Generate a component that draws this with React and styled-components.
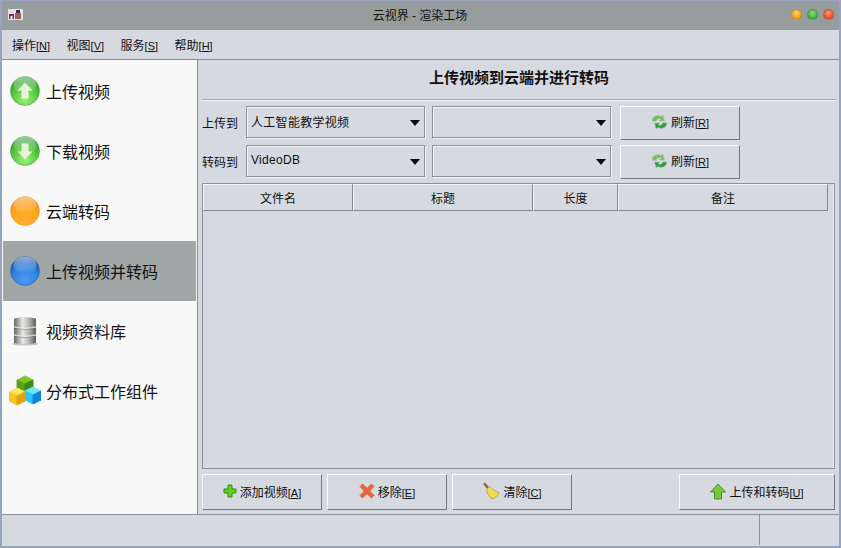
import React from 'react'
import styled, { createGlobalStyle } from 'styled-components'

const GlobalStyle = createGlobalStyle`
  html, body { margin: 0; padding: 0; background: #d6d9e0; }
  body { font-family: "Liberation Sans", "Noto Sans CJK SC", sans-serif; color: #111; }
  * { box-sizing: border-box; }
`

const Frame = styled.div`
  width: 841px;
  height: 548px;
  display: flex;
  flex-direction: column;
  background: #d6d9e0;
  border: 1px solid #97a3bf;
  border-width: 1px 2px 2px 2px;
  overflow: hidden;
`
const TitleBar = styled.div`
  height: 29px;
  flex: none;
  display: flex;
  align-items: center;
  background: #979c9c;
  padding: 0 5px 2px 6px;
  font-size: 12px;
  color: #141414;
`
const Title = styled.div`
  flex: 1;
  text-align: center;
  padding-left: 26px;
`
const Dots = styled.div`
  display: flex;
  gap: 5px;
`
const Dot = styled.span`
  width: 11px;
  height: 11px;
  border-radius: 50%;
  background: radial-gradient(circle at 50% 35%, ${p => p.$light}, ${p => p.$dark} 75%);
  border: 1px solid rgba(110, 110, 100, 0.35);
`
const MenuBar = styled.div`
  height: 30px;
  flex: none;
  display: flex;
  align-items: center;
  padding: 0 0 0 10px;
  gap: 16.5px;
  font-size: 12px;
  border-bottom: 1px solid #8b8e93;
`
const Mn = styled.span`
  display: inline-block;
  font-size: 11px;
  u { text-underline-offset: 1px; }
`
const Body = styled.div`
  flex: 1;
  min-height: 0;
  display: flex;
`
const Sidebar = styled.div`
  width: 196px;
  flex: none;
  background: #f9f9f9;
  padding: 1px 1px 0 1px;
  border-right: 1px solid #8b8e93;
`
const NavItem = styled.div`
  height: 60px;
  display: flex;
  align-items: center;
  gap: 5px;
  padding-left: 6px;
  font-size: 16px;
  background: ${p => (p.$active ? '#a1a6a7' : 'transparent')};
`
const Main = styled.div`
  flex: 1;
  min-width: 0;
  display: flex;
  flex-direction: column;
  padding: 0 3px 0 3px;
  border-left: 1px solid #d6d9e0;
`
const Heading = styled.div`
  height: 40px;
  flex: none;
  display: flex;
  align-items: center;
  justify-content: center;
  font-size: 15px;
  font-weight: 700;
  border-bottom: 1px solid #a3a6ab;
  box-shadow: 0 1px 0 #f2f3f6;
  padding-bottom: 6px;
`
const FormRows = styled.div`
  display: flex;
  flex-direction: column;
  gap: 6px;
  margin-top: 6px;
`
const FormRow = styled.div`
  display: flex;
  align-items: center;
  height: 33px;
`
const FieldLabel = styled.label`
  width: 44px;
  flex: none;
  font-size: 12px;
`
const Combo = styled.div`
  width: 180px;
  height: 33px;
  flex: none;
  margin-right: 6px;
  display: flex;
  align-items: center;
  justify-content: space-between;
  padding: 0 5px 3px 4px;
  font-size: 12px;
  letter-spacing: 0.3px;
  border: 1px solid;
  border-color: #8e9196 #f4f5f7 #f4f5f7 #8e9196;
  box-shadow: inset -1px -1px 0 #8e9196, inset 1px 1px 0 #f4f5f7;
`
const Caret = styled.span`
  width: 0;
  height: 0;
  border-left: 5.5px solid transparent;
  border-right: 5.5px solid transparent;
  border-top: 6px solid #0c0c0c;
  margin-top: 3px;
`
const Button = styled.button`
  width: ${p => p.$w || 120}px;
  height: ${p => p.$h || 34}px;
  flex: none;
  display: flex;
  align-items: center;
  justify-content: center;
  gap: 3px;
  padding: 0 0 2px;
  background: #d6d9e0;
  font: inherit;
  font-size: 12px;
  color: #111;
  border: 1px solid;
  border-color: #f7f8fa #74777c #74777c #f7f8fa;
`
const RefreshButton = styled(Button)`
  margin-left: 2px;
`
const TableFrame = styled.div`
  flex: 1;
  min-height: 0;
  margin-top: 5px;
  margin-right: 1px;
  border: 1px solid #8e9196;
  box-shadow: inset -1px 0 0 #f2f3f6;
`
const HeaderRow = styled.div`
  height: 27px;
  display: flex;
  padding-right: 5px;
`
const HeaderCell = styled.div`
  width: ${p => p.$w}px;
  flex: none;
  display: flex;
  align-items: center;
  justify-content: center;
  font-size: 12px;
  border: 1px solid;
  border-color: #f4f5f7 #84878c #84878c #f4f5f7;
`
const HeaderFill = styled.div`
  flex: 1;
  border-bottom: 1px solid transparent;
`
const ActionBar = styled.div`
  height: 45px;
  flex: none;
  display: flex;
  gap: 5px;
  padding: 5px 1px 0 0;
`
const Spacer = styled.div`
  flex: 1;
`
const StatusBar = styled.div`
  height: 32px;
  flex: none;
  display: flex;
  justify-content: flex-end;
  border-top: 1px solid #8b8e93;
`
const StatusCell = styled.div`
  width: 80px;
  margin-bottom: 1px;
  border-left: 1px solid #8e9196;
`

const Orb = ({ id, light, mid, dark, arrow }) => (
  <svg width="32" height="32" viewBox="0 0 32 32">
    <defs>
      <radialGradient id={id} cx="50%" cy="80%" r="75%">
        <stop offset="0" stopColor={light} />
        <stop offset="0.6" stopColor={mid} />
        <stop offset="1" stopColor={dark} />
      </radialGradient>
      <linearGradient id={`${id}-g`} x1="0" y1="0" x2="0" y2="1">
        <stop offset="0" stopColor="#fff" stopOpacity="0.55" />
        <stop offset="1" stopColor="#fff" stopOpacity="0" />
      </linearGradient>
    </defs>
    <circle cx="16" cy="16" r="14.5" fill={`url(#${id})`} stroke={dark} strokeOpacity="0.4" />
    <ellipse cx="16" cy="10" rx="11.5" ry="8.5" fill={`url(#${id}-g)`} />
    {arrow === 'up' && <path d="M16 7.5 L23.5 15.5 H19.5 V23.5 H12.5 V15.5 H8.5 Z" fill="#e4f5dc" />}
    {arrow === 'down' && <path d="M16 24.5 L23.5 16.5 H19.5 V8.5 H12.5 V16.5 H8.5 Z" fill="#e4f5dc" />}
  </svg>
)

const DbIcon = () => (
  <svg width="32" height="32" viewBox="0 0 32 32">
    <defs>
      <linearGradient id="db" x1="0" y1="0" x2="1" y2="0">
        <stop offset="0" stopColor="#666663" />
        <stop offset="0.4" stopColor="#e8e8e6" />
        <stop offset="0.7" stopColor="#b0b0ad" />
        <stop offset="1" stopColor="#5c5c5a" />
      </linearGradient>
    </defs>
    <ellipse cx="16" cy="29" rx="13" ry="1.6" fill="#c4c4c4" />
    <path d="M5 3.5 Q16 0.5 27 3.5 V28 Q16 30.5 5 28 Z" fill="url(#db)" />
    <path d="M5 12 Q16 14.5 27 12 M5 20 Q16 22.5 27 20" fill="none" stroke="#f4f4f2" strokeOpacity="0.7" strokeWidth="1.3" />
    <path d="M5 13.3 Q16 15.8 27 13.3 M5 21.3 Q16 23.8 27 21.3" fill="none" stroke="#555" strokeOpacity="0.4" />
  </svg>
)

const Cube = ({ x, y, top, left, right }) => (
  <g transform={`translate(${x} ${y})`} strokeLinejoin="round">
    <path d="M8 0 L16 4 L8 8 L0 4 Z" fill={top} stroke={top} />
    <path d="M0 4 L8 8 V17 L0 13 Z" fill={left} stroke={left} />
    <path d="M16 4 L8 8 V17 L16 13 Z" fill={right} stroke={right} />
  </g>
)

const CubesIcon = () => (
  <svg width="32" height="32" viewBox="0 0 32 32">
    <Cube x={8} y={1} top="#7cc628" left="#58a51c" right="#3f8a16" />
    <Cube x={16} y={12} top="#6fe4ff" left="#2cc4f6" right="#0f85d6" />
    <Cube x={0} y={13} top="#ffe45c" left="#fbc420" right="#e2a414" />
  </svg>
)

const RefreshIcon = () => (
  <svg width="17" height="16" viewBox="0 0 17 16">
    <path d="M1 7 C1 3 6 0 10 2.5 L12 1 L13.5 7 H8 L9.8 5.3 C7.5 4.2 5.5 5.3 5 7.5 Z" fill="#79bb5e" stroke="#b3c6b0" strokeWidth="0.7" />
    <path d="M16 9 C16 13 11 16 7 13.5 L5 15 L3.5 9 H9 L7.2 10.7 C9.5 11.8 11.5 10.7 12 8.5 Z" fill="#2f9c42" stroke="#b3c6b0" strokeWidth="0.7" />
  </svg>
)

const PlusIcon = () => (
  <svg width="14" height="16" viewBox="0 0 14 16">
    <path d="M5 2 H9 V6 H13 V10 H9 V14 H5 V10 H1 V6 H5 Z" fill="#5fd01d" stroke="#2c8f16" />
  </svg>
)

const CrossIcon = () => (
  <svg width="16" height="16" viewBox="0 0 16 16">
    <path d="M1 3.5 L3.5 1 L8 5.2 L12.5 1 L15 3.5 L10.8 8 L15 12.5 L12.5 15 L8 10.8 L3.5 15 L1 12.5 L5.2 8 Z" fill="#e8693a" stroke="#c9502e" strokeWidth="0.6" />
  </svg>
)

const BroomIcon = () => (
  <svg width="18" height="18" viewBox="0 0 18 18">
    <path d="M1 2 L3 0.6 L7.2 5.5 L5.4 7 Z" fill="#8a6a2a" />
    <path d="M4.6 7 L8 4.4 C10 7 13.5 9.6 17 10.6 C15.5 14 13 16.4 10 17 C7 14.8 5 11 4.6 7 Z" fill="#f0da4e" stroke="#a8963a" strokeWidth="0.7" />
  </svg>
)

const UploadIcon = () => (
  <svg width="16" height="17" viewBox="0 0 16 17">
    <path d="M8 1 L15.5 9 H11.5 V16 H4.5 V9 H0.5 Z" fill="#7cc63a" stroke="#4b8f30" />
  </svg>
)

const AppIcon = () => (
  <svg width="15" height="11" viewBox="0 0 15 11">
    <rect width="15" height="11" fill="#dfe2ee" />
    <rect x="1" y="5" width="5" height="5" fill="#8c2b4d" />
    <rect x="2.5" y="7" width="2" height="3" fill="#eee" />
    <rect x="8" y="1" width="4" height="3" fill="#3c2f35" />
    <rect x="7" y="4" width="6" height="6" fill="#a0625a" />
  </svg>
)

const Key = ({ label, k }) => (
  <span>
    {label}
    <Mn>[<u>{k}</u>]</Mn>
  </span>
)

const navItems = [
  { label: '上传视频', icon: <Orb id="o1" light="#9df07a" mid="#58c63e" dark="#27902a" arrow="up" /> },
  { label: '下载视频', icon: <Orb id="o2" light="#9df07a" mid="#58c63e" dark="#27902a" arrow="down" /> },
  { label: '云端转码', icon: <Orb id="o3" light="#ffb02e" mid="#ffa51e" dark="#f08a0c" /> },
  { label: '上传视频并转码', icon: <Orb id="o4" light="#4f9cf0" mid="#2f80e0" dark="#0d4fa8" />, active: true },
  { label: '视频资料库', icon: <DbIcon /> },
  { label: '分布式工作组件', icon: <CubesIcon /> },
]

const columns = [
  { label: '文件名', w: 150 },
  { label: '标题', w: 180 },
  { label: '长度', w: 85 },
  { label: '备注', w: 210 },
]

const rows = [
  { label: '上传到', value: '人工智能教学视频' },
  { label: '转码到', value: 'VideoDB' },
]

export default function App() {
  return (
    <Frame>
      <GlobalStyle />
      <TitleBar>
        <AppIcon />
        <Title>云视界 - 渲染工场</Title>
        <Dots>
          <Dot $light="#ffd060" $dark="#f09a16" />
          <Dot $light="#8fe07a" $dark="#34a83a" />
          <Dot $light="#ff9a70" $dark="#e8462a" />
        </Dots>
      </TitleBar>
      <MenuBar>
        <Key label="操作" k="N" />
        <Key label="视图" k="V" />
        <Key label="服务" k="S" />
        <Key label="帮助" k="H" />
      </MenuBar>
      <Body>
        <Sidebar>
          {navItems.map(item => (
            <NavItem key={item.label} $active={item.active}>
              {item.icon}
              {item.label}
            </NavItem>
          ))}
        </Sidebar>
        <Main>
          <Heading>上传视频到云端并进行转码</Heading>
          <FormRows>
            {rows.map(row => (
              <FormRow key={row.label}>
                <FieldLabel>{row.label}</FieldLabel>
                <Combo>{row.value}<Caret /></Combo>
                <Combo><span /><Caret /></Combo>
                <RefreshButton>
                  <RefreshIcon />
                  <Key label="刷新" k="R" />
                </RefreshButton>
              </FormRow>
            ))}
          </FormRows>
          <TableFrame>
            <HeaderRow>
              {columns.map(col => (
                <HeaderCell key={col.label} $w={col.w}>{col.label}</HeaderCell>
              ))}
              <HeaderFill />
            </HeaderRow>
          </TableFrame>
          <ActionBar>
            <Button $h={36}><PlusIcon /><Key label="添加视频" k="A" /></Button>
            <Button $h={36}><CrossIcon /><Key label="移除" k="E" /></Button>
            <Button $h={36}><BroomIcon /><Key label="清除" k="C" /></Button>
            <Spacer />
            <Button $w={156} $h={36}><UploadIcon /><Key label="上传和转码" k="U" /></Button>
          </ActionBar>
        </Main>
      </Body>
      <StatusBar>
        <StatusCell />
      </StatusBar>
    </Frame>
  )
}
